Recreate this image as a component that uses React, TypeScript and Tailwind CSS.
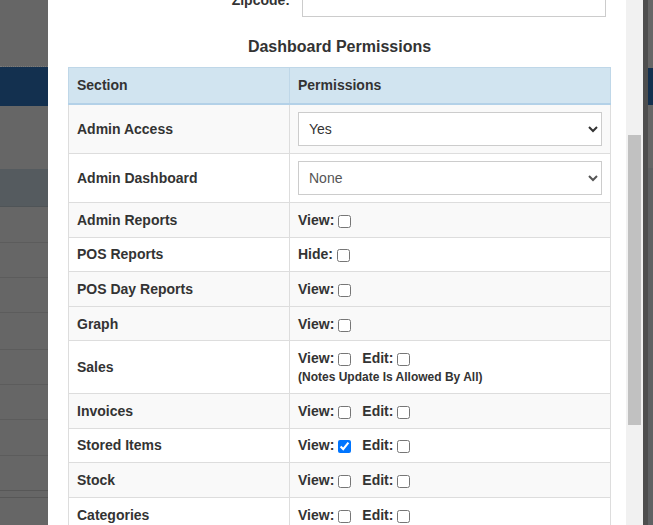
type CheckItem = { name: string; checked?: boolean };

type PermRow =
  | { label: string; kind: "select"; value: string; dim?: boolean; striped: boolean }
  | { label: string; kind: "check"; items: CheckItem[]; note?: string; striped: boolean };

const rows: PermRow[] = [
  { label: "Admin Access", kind: "select", value: "Yes", striped: true },
  { label: "Admin Dashboard", kind: "select", value: "None", dim: true, striped: false },
  { label: "Admin Reports", kind: "check", items: [{ name: "View" }], striped: true },
  { label: "POS Reports", kind: "check", items: [{ name: "Hide" }], striped: false },
  { label: "POS Day Reports", kind: "check", items: [{ name: "View" }], striped: true },
  { label: "Graph", kind: "check", items: [{ name: "View" }], striped: true },
  {
    label: "Sales",
    kind: "check",
    items: [{ name: "View" }, { name: "Edit" }],
    note: "(Notes Update Is Allowed By All)",
    striped: false,
  },
  { label: "Invoices", kind: "check", items: [{ name: "View" }, { name: "Edit" }], striped: true },
  {
    label: "Stored Items",
    kind: "check",
    items: [{ name: "View", checked: true }, { name: "Edit" }],
    striped: false,
  },
  { label: "Stock", kind: "check", items: [{ name: "View" }, { name: "Edit" }], striped: true },
  { label: "Categories", kind: "check", items: [{ name: "View" }, { name: "Edit" }], striped: false },
];

// dimmed page behind the modal, left side
const leftBands = [
  { h: "h-[67px]", c: "bg-[#666666] border-b border-dotted border-[#7a7a7a]" },
  { h: "h-[39px]", c: "bg-[#13304f]" },
  { h: "h-[63px]", c: "bg-[#666666]" },
  { h: "h-[38px]", c: "bg-[#555b5f] border-b border-[#4f5457]" },
  { h: "h-[36px]", c: "bg-[#666666] border-b border-[#5c5c5c]" },
  { h: "h-[35px]", c: "bg-[#666666] border-b border-[#5c5c5c]" },
  { h: "h-[35px]", c: "bg-[#666666] border-b border-[#5c5c5c]" },
  { h: "h-[37px]", c: "bg-[#666666] border-b border-[#5c5c5c]" },
  { h: "h-[35px]", c: "bg-[#666666] border-b border-[#5c5c5c]" },
  { h: "h-[35px]", c: "bg-[#666666] border-b border-[#5c5c5c]" },
  { h: "h-[36px]", c: "bg-[#666666] border-b border-[#5c5c5c]" },
  { h: "h-[35px]", c: "bg-[#666666] border-b border-[#575757]" },
  { h: "h-[7px]", c: "bg-[#666666] border-b border-[#575757]" },
];

function Check({ item, first }: { item: CheckItem; first: boolean }) {
  return (
    <span className={first ? "" : "ml-2"}>
      <span>{item.name}:</span>
      <input
        type="checkbox"
        defaultChecked={item.checked}
        className="ml-1 mr-[3px] h-[13px] w-[13px] align-[-3px]"
      />
    </span>
  );
}

export default function App() {
  return (
    <div className="flex h-[525px] w-[653px] overflow-hidden bg-[#666666] font-['Liberation_Sans',Arial,sans-serif] text-[#333]">
      <div className="flex w-[48px] shrink-0 flex-col">
        {leftBands.map((b, i) => (
          <div key={i} className={`${b.h} ${b.c} shrink-0`} />
        ))}
      </div>

      <div className="w-[578px] shrink-0 overflow-hidden bg-white pl-[20px] pr-[15px]">
        <div className="mt-[-17px] flex h-[34px] items-center">
          <label className="w-[222px] text-right text-[14px] font-bold">Zipcode:</label>
          <input type="text" className="ml-[12px] h-[34px] w-[304px] border border-[#ccc] bg-white" />
        </div>

        <h4 className="mt-[19px] mb-[9px] text-center text-[16px] leading-[22px] font-bold">
          Dashboard Permissions
        </h4>

        <table className="w-full table-fixed border-collapse text-[14px] leading-5 font-bold">
          <colgroup>
            <col className="w-[221px]" />
            <col />
          </colgroup>
          <thead>
            <tr className="bg-[#d1e4f0]">
              <th className="border border-b-2 border-[#bfd7e8] border-b-[#b3d1e8] px-2 pt-[7px] pb-2 text-left">
                Section
              </th>
              <th className="border border-b-2 border-[#bfd7e8] border-b-[#b3d1e8] px-2 pt-[7px] pb-2 text-left">
                Permissions
              </th>
            </tr>
          </thead>
          <tbody>
            {rows.map((r) => (
              <tr key={r.label} className={r.striped ? "bg-[#f9f9f9]" : "bg-white"}>
                <td className="border border-[#ddd] px-2 py-[6.8px] align-middle">{r.label}</td>
                {r.kind === "select" ? (
                  <td className="border border-[#ddd] px-2 py-[7px]">
                    <select
                      defaultValue={r.value}
                      className={`h-[34px] w-full border border-[#ccc] bg-white px-[6px] text-[14px] font-normal ${
                        r.dim ? "text-[#555]" : "text-[#333]"
                      }`}
                    >
                      <option>Yes</option>
                      <option>No</option>
                      <option>None</option>
                    </select>
                  </td>
                ) : (
                  <td className="border border-[#ddd] px-2 py-[6.8px] align-middle">
                    <div>
                      {r.items.map((it, i) => (
                        <Check key={it.name} item={it} first={i === 0} />
                      ))}
                    </div>
                    {r.note && <div className="text-[12px] leading-[18px]">{r.note}</div>}
                  </td>
                )}
              </tr>
            ))}
          </tbody>
        </table>
      </div>

      <div className="flex w-[17px] shrink-0 flex-col bg-[#f1f1f1] px-[2px] pt-[135px]">
        <div className="h-[290px] bg-[#c1c1c1]" />
      </div>

      <div className="w-[5px] shrink-0 bg-[#4e4e4e]" />
      <div className="flex w-[5px] shrink-0 flex-col">
        <div className="h-[68px] bg-[#666666]" />
        <div className="h-[37px] bg-[#13304f]" />
        <div className="h-[63px] bg-[#666666]" />
        <div className="flex-1 bg-[#5f6163]" />
      </div>
    </div>
  );
}
